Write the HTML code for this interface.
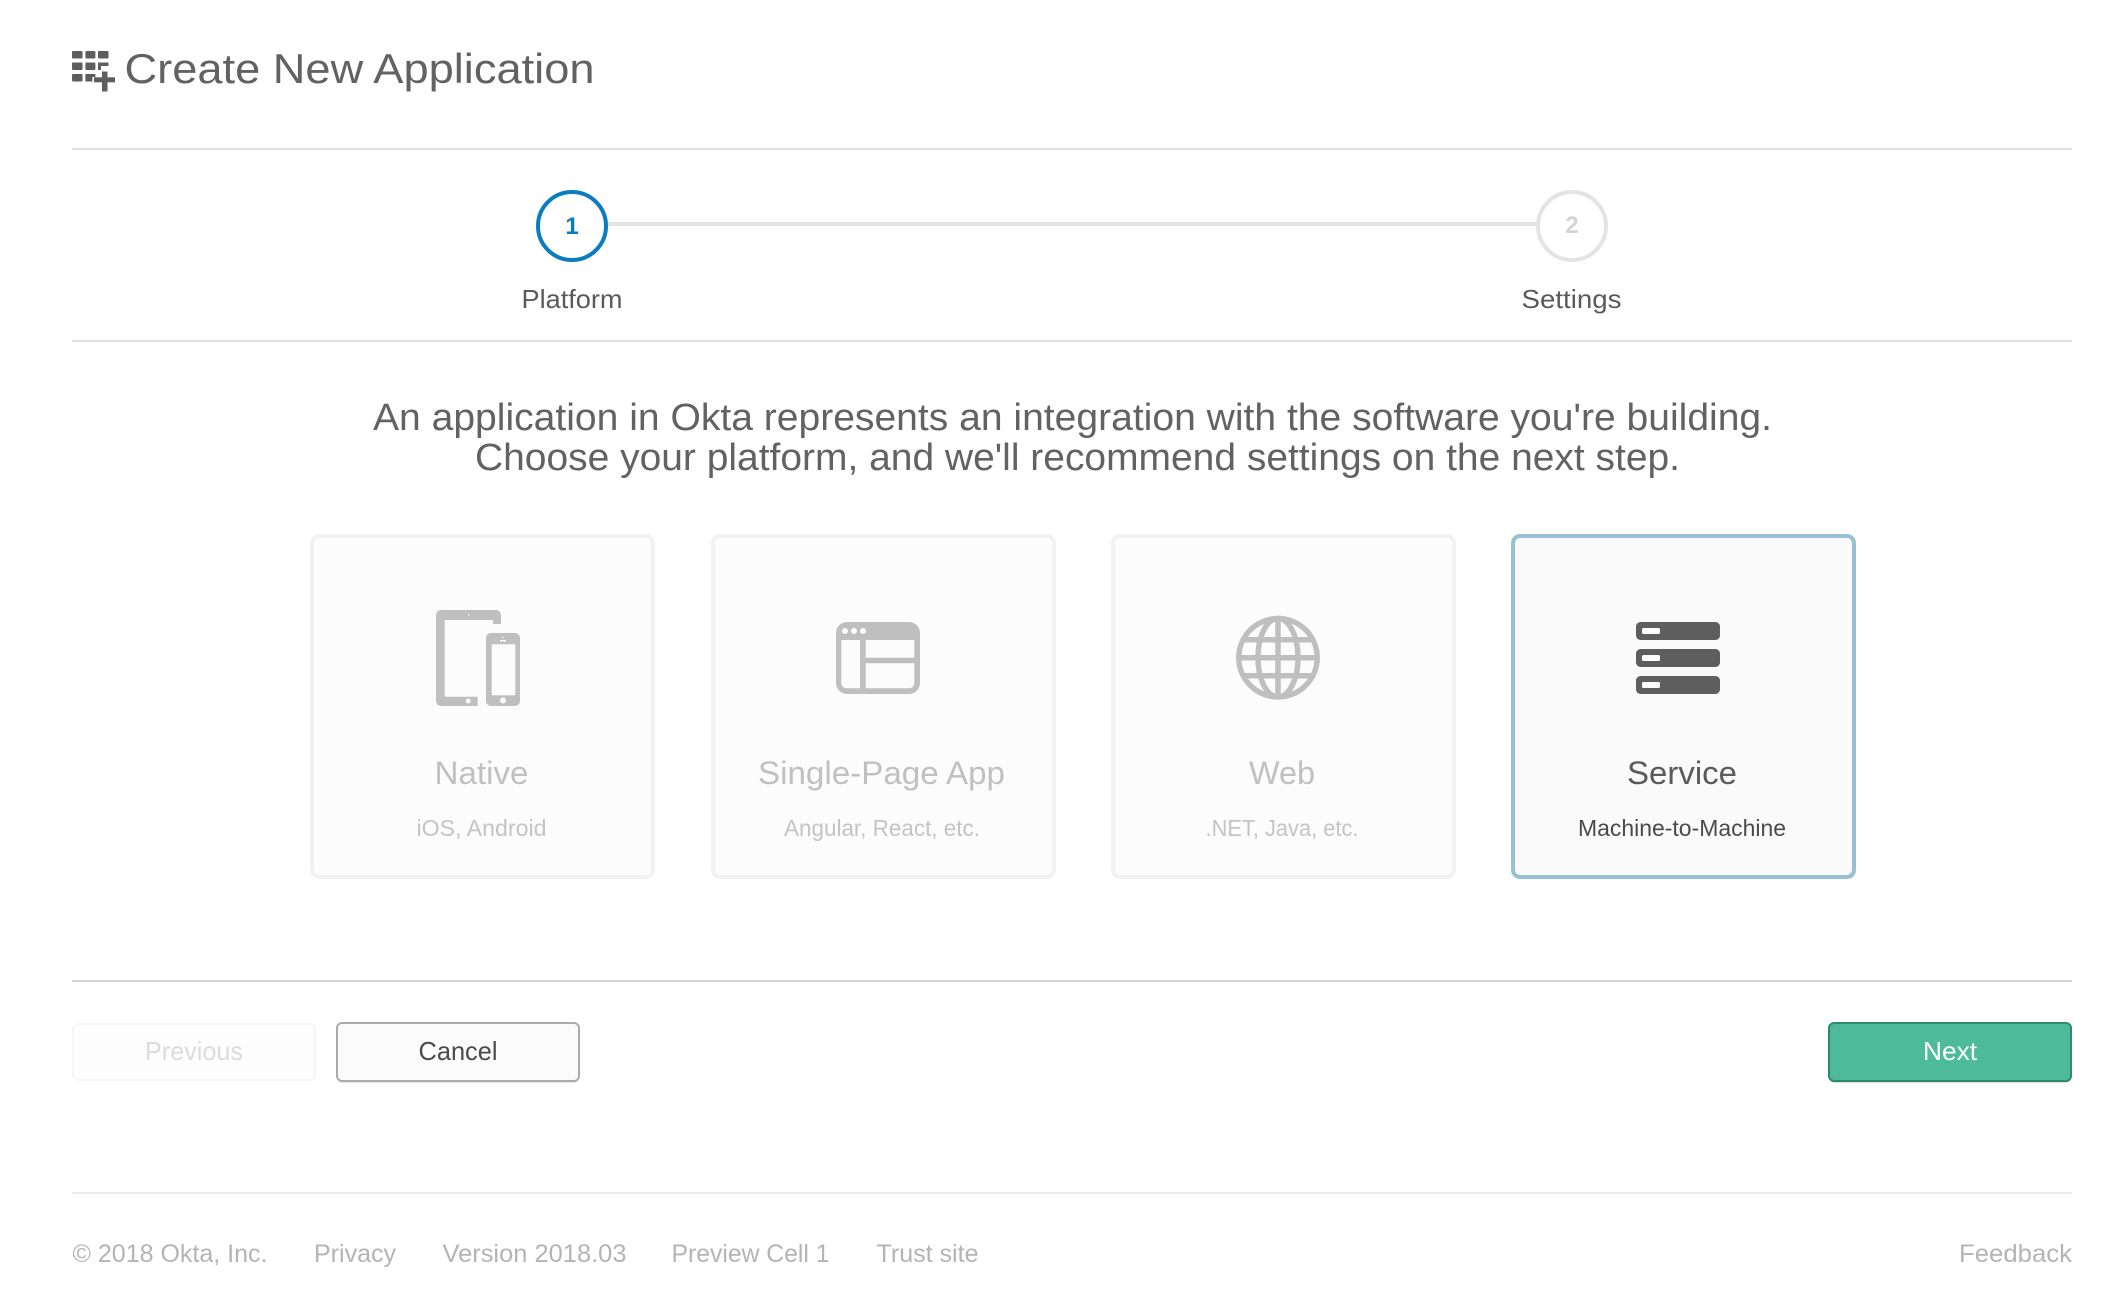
<!DOCTYPE html>
<html lang="en">
<head>
<meta charset="utf-8">
<title>Create New Application</title>
<style>
html,body{margin:0;padding:0;background:#fff;width:2124px;height:1302px;overflow:hidden}
svg{display:block}
text{font-family:"Liberation Sans",sans-serif}
</style>
</head>
<body>
<svg width="2124" height="1302" viewBox="0 0 2124 1302" xmlns="http://www.w3.org/2000/svg">
<rect width="2124" height="1302" fill="#fff"/>

<!-- header icon -->
<g fill="#5e5e5e">
<rect x="72" y="51" width="10.5" height="7.5" rx="1"/>
<rect x="85.4" y="51" width="10" height="7.5" rx="1"/>
<rect x="98" y="51" width="10.5" height="7.5" rx="1"/>
<rect x="72" y="62.5" width="10.5" height="7.5" rx="1"/>
<rect x="85.4" y="62.5" width="10" height="7.5" rx="1"/>
<path d="M98 62.500h10.500v3.500h-7.500v4h-3z"/>
<rect x="72" y="74" width="10.5" height="7.5" rx="1"/>
<path d="M85.400 74h10v3h-3v4.500h-7z"/>
<rect x="94" y="77.300" width="21" height="5"/>
<rect x="102" y="71.500" width="5.500" height="20"/>
</g>
<text x="124.500" y="83" font-size="42" fill="#626262" textLength="470" lengthAdjust="spacingAndGlyphs">Create New Application</text>

<rect x="72" y="148" width="2000" height="2" fill="#e2e2e2"/>

<!-- stepper -->
<rect x="606" y="222" width="931" height="4" fill="#e4e4e4"/>
<circle cx="572" cy="226" r="34" fill="#fff" stroke="#0a7cc0" stroke-width="4"/>
<text x="572" y="234" font-size="24" font-weight="bold" fill="#0a7cc0" text-anchor="middle">1</text>
<circle cx="1572" cy="226" r="34" fill="#fff" stroke="#e4e4e4" stroke-width="4"/>
<text x="1572" y="233" font-size="24" font-weight="bold" fill="#d4d4d4" text-anchor="middle">2</text>
<text x="521.500" y="308" font-size="26" fill="#5a5a5a" textLength="101" lengthAdjust="spacingAndGlyphs">Platform</text>
<text x="1521.500" y="308" font-size="26" fill="#5a5a5a" textLength="100" lengthAdjust="spacingAndGlyphs">Settings</text>

<rect x="72" y="340" width="2000" height="2" fill="#e2e2e2"/>

<!-- intro -->
<text x="373" y="430" font-size="38" fill="#626262" textLength="1399" lengthAdjust="spacingAndGlyphs">An application in Okta represents an integration with the software you're building.</text>
<text x="475" y="470" font-size="38" fill="#626262" textLength="1205" lengthAdjust="spacingAndGlyphs">Choose your platform, and we'll recommend settings on the next step.</text>

<!-- cards -->
<rect x="312" y="536" width="341" height="341" rx="7" fill="#fcfcfc" stroke="#f2f2f2" stroke-width="4"/>
<rect x="713" y="536" width="341" height="341" rx="7" fill="#fcfcfc" stroke="#f2f2f2" stroke-width="4"/>
<rect x="1113" y="536" width="341" height="341" rx="7" fill="#fcfcfc" stroke="#f2f2f2" stroke-width="4"/>
<rect x="1513" y="536" width="341" height="341" rx="7" fill="#fafafa" stroke="#97c0d4" stroke-width="4"/>

<!-- native icon -->
<path fill="#bfbfbf" d="M441 610h55a5 5 0 0 1 5 5v9h-8v-4h-48.300v76.700h33v9.300h-36.700a5 5 0 0 1-5-5v-86a5 5 0 0 1 5-5z"/>
<circle cx="468.500" cy="615" r=".8" fill="#fcfcfc"/>
<rect x="486" y="633" width="34" height="73" rx="5" fill="#bfbfbf"/>
<rect x="491.700" y="644.300" width="23.600" height="51" fill="#fcfcfc"/>
<circle cx="503" cy="700.500" r="3" fill="#fcfcfc"/>
<rect x="500" y="640" width="6" height="1.500" fill="#fcfcfc"/>
<circle cx="503" cy="637.500" r=".7" fill="#fcfcfc"/>
<circle cx="468.300" cy="701" r="2.500" fill="#fcfcfc"/>

<!-- SPA icon -->
<rect x="836" y="622" width="84" height="72" rx="11" fill="#bfbfbf"/>
<path fill="#fcfcfc" d="M841.300 640h18.700v48.300h-13.700a5 5 0 0 1-5-5zM865.700 640h48.600v17.700h-48.600zM865.700 663.300h48.600v20a5 5 0 0 1-5 5h-43.600z"/>
<circle cx="845" cy="631" r="3" fill="#fcfcfc"/>
<circle cx="854" cy="631" r="3" fill="#fcfcfc"/>
<circle cx="863" cy="631" r="3" fill="#fcfcfc"/>

<!-- web icon -->
<g fill="none" stroke="#bfbfbf" stroke-width="5.500">
<circle cx="1278" cy="657.700" r="39.200"/>
<ellipse cx="1278" cy="657.700" rx="20" ry="39.200"/>
<path d="M1278 618.500v78.400M1240 657.700h76M1241.500 639.700h73M1241.500 675.700h73"/>
</g>

<!-- service icon -->
<g fill="#5e5e5e">
<rect x="1636" y="622" width="84" height="18" rx="4.500"/>
<rect x="1636" y="649" width="84" height="18" rx="4.500"/>
<rect x="1636" y="676" width="84" height="18" rx="4.500"/>
</g>
<g fill="#fcfcfc">
<rect x="1642" y="628" width="18" height="6" rx="1.500"/>
<rect x="1642" y="655" width="18" height="6" rx="1.500"/>
<rect x="1642" y="682" width="18" height="6" rx="1.500"/>
</g>

<!-- card labels -->
<g font-size="32" fill="#c0c0c0">
<text x="434.500" y="784" textLength="94" lengthAdjust="spacingAndGlyphs">Native</text>
<text x="758" y="784" textLength="247" lengthAdjust="spacingAndGlyphs">Single-Page App</text>
<text x="1249" y="784" textLength="66" lengthAdjust="spacingAndGlyphs">Web</text>
</g>
<text x="1627" y="784" font-size="32" fill="#5a5a5a" textLength="110" lengthAdjust="spacingAndGlyphs">Service</text>
<g font-size="23" fill="#c4c4c4">
<text x="416.500" y="836" textLength="130" lengthAdjust="spacingAndGlyphs">iOS, Android</text>
<text x="784" y="836" textLength="196" lengthAdjust="spacingAndGlyphs">Angular, React, etc.</text>
<text x="1205.500" y="836" textLength="153" lengthAdjust="spacingAndGlyphs">.NET, Java, etc.</text>
</g>
<text x="1578" y="836" font-size="23" fill="#4a4a4a" textLength="208" lengthAdjust="spacingAndGlyphs">Machine-to-Machine</text>

<rect x="72" y="980" width="2000" height="2" fill="#d6d6d6"/>

<!-- buttons -->
<rect x="73" y="1024" width="242" height="56" rx="5" fill="#fdfdfd" stroke="#f6f6f6" stroke-width="2"/>
<text x="145" y="1060" font-size="26" fill="#dcdcdc" textLength="98" lengthAdjust="spacingAndGlyphs">Previous</text>

<rect x="337" y="1025" width="242" height="58" rx="6" fill="#e6e6e6"/>
<rect x="337" y="1023" width="242" height="58" rx="5" fill="#fbfbfb" stroke="#ababab" stroke-width="2"/>
<text x="418.500" y="1060" font-size="26" fill="#4a4a4a" textLength="79" lengthAdjust="spacingAndGlyphs">Cancel</text>

<rect x="1829" y="1025" width="242" height="58" rx="6" fill="#dcdcdc"/>
<rect x="1829" y="1023" width="242" height="58" rx="5" fill="#4dbb99" stroke="#2f8a6e" stroke-width="2"/>
<text x="1923" y="1060" font-size="26" fill="#fff" textLength="54" lengthAdjust="spacingAndGlyphs">Next</text>

<rect x="72" y="1192" width="2000" height="2" fill="#ececec"/>

<!-- footer -->
<g font-size="25" fill="#b4b4b4">
<text x="72.500" y="1262" textLength="195" lengthAdjust="spacingAndGlyphs">© 2018 Okta, Inc.</text>
<text x="314" y="1262" textLength="82" lengthAdjust="spacingAndGlyphs">Privacy</text>
<text x="442.500" y="1262" textLength="184" lengthAdjust="spacingAndGlyphs">Version 2018.03</text>
<text x="671.500" y="1262" textLength="158" lengthAdjust="spacingAndGlyphs">Preview Cell 1</text>
<text x="876.500" y="1262" textLength="102" lengthAdjust="spacingAndGlyphs">Trust site</text>
<text x="1959" y="1262" textLength="113" lengthAdjust="spacingAndGlyphs">Feedback</text>
</g>
</svg>
</body>
</html>
